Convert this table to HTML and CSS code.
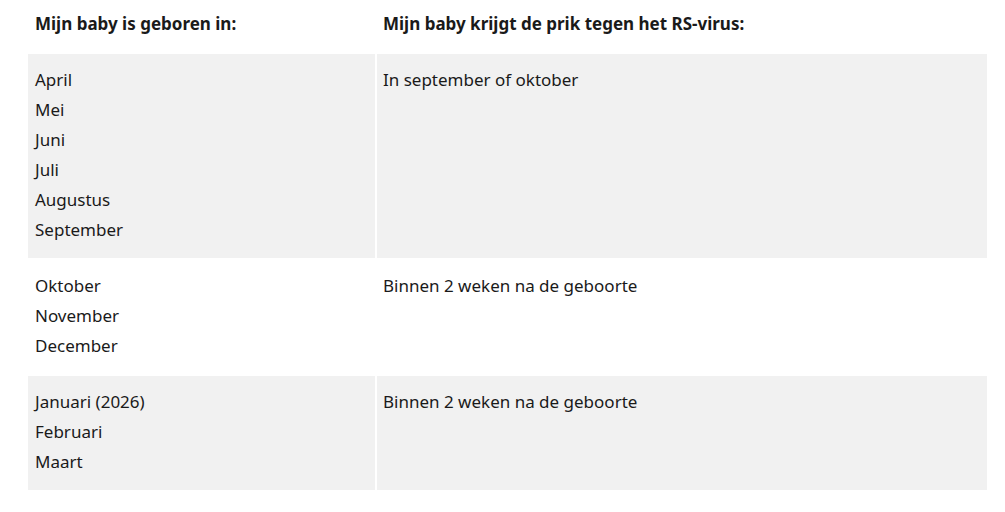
FILE: index.html
```html
<!DOCTYPE html>
<html lang="nl">
<head>
<meta charset="utf-8">
<link rel="stylesheet" href="styles.css">
</head>
<body>
<div class="wrap">
<table class="schedule">
  <thead>
    <tr>
      <th class="col-born">Mijn baby is geboren in:</th>
      <th class="col-shot">Mijn baby krijgt de prik tegen het RS-virus:</th>
    </tr>
  </thead>
  <tbody>
    <tr class="shade">
      <td>April<br>Mei<br>Juni<br>Juli<br>Augustus<br>September</td>
      <td>In september of oktober</td>
    </tr>
    <tr class="mid">
      <td>Oktober<br>November<br>December</td>
      <td>Binnen 2 weken na de geboorte</td>
    </tr>
    <tr class="shade">
      <td>Januari (2026)<br>Februari<br>Maart</td>
      <td>Binnen 2 weken na de geboorte</td>
    </tr>
  </tbody>
</table>
</div>
</body>
</html>
```
FILE: styles.css
```css
html, body {
  margin: 0;
  padding: 0;
  background: #fff;
}
body {
  font-family: "Noto Sans", "Open Sans", sans-serif;
  color: #1a1a1a;
  font-size: 17px;
  line-height: 30px;
}
.wrap {
  padding: 0 18px 0 28px;
}
.schedule {
  width: 963px;
  border-collapse: separate;
  border-spacing: 2px 0;
  margin-left: -2px;
  table-layout: fixed;
}
.schedule th {
  text-align: left;
  font-weight: 700;
  padding: 9px 7px 15px;
  vertical-align: top;
}
.schedule .col-born { width: 333px; }
.schedule .col-shot { padding-left: 6px; }
.schedule td {
  vertical-align: top;
  padding: 11px 7px 13px;
}
.schedule td + td {
  padding-left: 6px;
}
.shade td {
  background: #f1f1f1;
}
.mid td {
  padding-top: 13px;
  padding-bottom: 15px;
}
```
